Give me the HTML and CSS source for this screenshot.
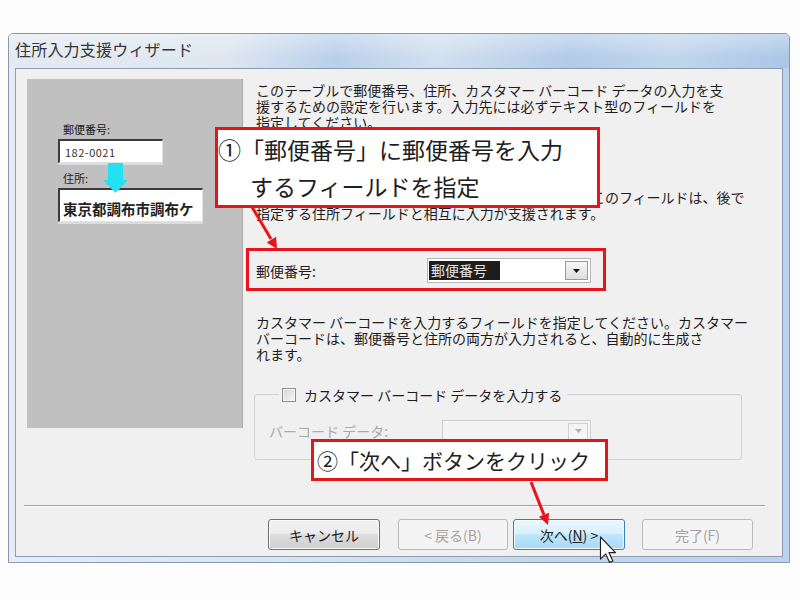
FILE: index.html
```html
<!DOCTYPE html>
<html lang="ja">
<head>
<meta charset="utf-8">
<title>住所入力支援ウィザード</title>
<link rel="stylesheet" href="styles.css">
</head>
<body>
<div class="window">
  <div class="titlebar"><span class="title">住所入力支援ウィザード</span></div>
  <div class="client">
    <div class="main">
      <div class="preview">
        <div class="pv-label">郵便番号:</div>
        <div class="pv-input pv-zip">182-0021</div>
        <div class="pv-label pv-label2">住所:</div>
        <div class="pv-input pv-addr">東京都調布市調布ケ</div>
        <svg class="cyan-arrow" width="25" height="30" viewBox="0 0 25 30"><polygon points="5,0 20,0 20,17 25,17 12.5,30 0,17 5,17" fill="#22e2f2"/></svg>
      </div>
      <div class="content">
        <p class="para p1">このテーブルで郵便番号、住所、カスタマー バーコード データの入力を支<br>援するための設定を行います。入力先には必ずテキスト型のフィールドを<br>指定してください。</p>
        <p class="para p2">郵便番号を入力するフィールドを指定してください。このフィールドは、後で<br>指定する住所フィールドと相互に入力が支援されます。</p>
        <div class="row">
          <span class="row-label">郵便番号:</span>
          <div class="combo">
            <span class="sel">郵便番号</span>
            <span class="drop"><svg width="7" height="4" viewBox="0 0 7 4"><polygon points="0,0 7,0 3.5,4" fill="#111"/></svg></span>
          </div>
        </div>
        <p class="para p3">カスタマー バーコードを入力するフィールドを指定してください。カスタマー<br>バーコードは、郵便番号と住所の両方が入力されると、自動的に生成さ<br>れます。</p>
        <div class="group">
          <div class="legend"><span class="checkbox"></span><span class="legend-text">カスタマー バーコード データを入力する</span></div>
          <div class="group-row">
            <span class="dis-label">バーコード データ:</span>
            <div class="combo combo-dis">
              <span class="drop drop-dis"><svg width="7" height="4" viewBox="0 0 7 4"><polygon points="0,0 7,0 3.5,4" fill="#b0b0b0"/></svg></span>
            </div>
          </div>
        </div>
      </div>
    </div>
    <div class="separator"></div>
    <div class="buttons">
      <div class="btn btn-normal btn-cancel">キャンセル</div>
      <div class="btn btn-disabled btn-back">&lt; 戻る(B)</div>
      <div class="btn btn-hover btn-next">次へ(<u>N</u>) &gt;</div>
      <div class="btn btn-disabled btn-finish">完了(F)</div>
    </div>
  </div>
</div>

<div class="highlight"></div>
<div class="callout callout1">
  <div class="co-line">①「郵便番号」に郵便番号を入力</div>
  <div class="co-line co-indent">するフィールドを指定</div>
</div>
<div class="callout callout2">
  <div class="co-line2">②「次へ」ボタンをクリック</div>
</div>

<svg class="overlay" width="800" height="600" viewBox="0 0 800 600">
  <line x1="252" y1="207" x2="271" y2="239" stroke="#e8141c" stroke-width="3"/>
  <polygon points="277,249 266.7,242.4 276.1,236.8" fill="#e8141c"/>
  <line x1="531" y1="482" x2="544" y2="515" stroke="#e8141c" stroke-width="3"/>
  <polygon points="548,525 538.9,516.8 549.1,512.8" fill="#e8141c"/>
  <g transform="translate(600.5,537) scale(1.3)">
    <polygon points="0,0 0,17 4,13 7,19.5 9.5,18.5 6.5,12 11.5,12" fill="#fff" stroke="#222" stroke-width="0.9" stroke-linejoin="round"/>
  </g>
</svg>
</body>
</html>
```

FILE: styles.css
```css
* { box-sizing: border-box; }
html, body { margin: 0; padding: 0; }
body {
  width: 800px;
  height: 600px;
  background: #fdfdfd;
  font-family: "Noto Sans CJK JP", "Noto Sans", sans-serif;
  color: #1c1c1c;
  position: relative;
  overflow: hidden;
}

.window {
  margin: 33px 0 0 8px;
  width: 782px;
  height: 530px;
  border: 1px solid #8799b0;
  border-radius: 5px 5px 0 0;
  padding: 0 6px 5px 6px;
  background: linear-gradient(to right, #e6edf5 0%, #d6e2ef 40%, #c4d6eb 70%, #bcd1ea 100%);
  display: flex;
  flex-direction: column;
}

.titlebar {
  height: 34px;
  display: flex;
  align-items: center;
  padding-bottom: 5px;
  background:
    linear-gradient(to bottom, rgba(255,255,255,0.35), rgba(255,255,255,0) 70%),
    linear-gradient(to right, #e4eaf1 0%, #dde6f0 28%, #b9d0ea 42%, #d2e0ef 55%, #b2cbe8 72%, #c1d6ec 85%, #abc6e6 100%);
  margin: 0 -6px;
  padding-left: 6px;
  border-radius: 4px 4px 0 0;
}
.title {
  font-size: 16px;
  color: #353535;
  letter-spacing: 0.2px;
}

.client {
  height: 489px;
  border: 1px solid #8c9db3;
  background: #f0f0f0;
  padding: 10px 0 0 11px;
  display: flex;
  flex-direction: column;
  overflow: hidden;
}

.main {
  display: flex;
  align-items: flex-start;
}

.preview {
  position: relative;
  width: 216px;
  height: 349px;
  flex-shrink: 0;
  background: #c0c0c0;
  border-right: 1px solid #aaaaaa;
  padding-top: 44px;
}
.pv-label {
  margin-left: 36px;
  font-size: 11px;
  line-height: 13px;
  color: #202020;
}
.pv-label2 {
  margin-top: 9px;
}
.pv-input {
  margin-left: 31px;
  margin-top: 3px;
  background: #ffffff;
  border-top: 2px solid #3a3a3a;
  border-left: 2px solid #3a3a3a;
  border-right: 1px solid #e2e2e2;
  border-bottom: 1px solid #e2e2e2;
  box-shadow: 0 2px 0 #dcdcdc;
  display: flex;
  align-items: center;
  padding-left: 5px;
}
.pv-zip {
  width: 105px;
  height: 24px;
  font-size: 11px;
  color: #333;
  letter-spacing: 0.5px;
}
.pv-addr {
  width: 145px;
  height: 34px;
  font-size: 14.5px;
  font-weight: 700;
  color: #222;
  padding-left: 3px;
  padding-top: 5px;
}
.cyan-arrow {
  position: absolute;
  left: 76px;
  top: 84px;
}

.content {
  margin-left: 13px;
  width: 500px;
}
.para {
  margin: 0;
  font-size: 14px;
  line-height: 16px;
  color: #1e1e1e;
  white-space: nowrap;
}
.p1 { margin-top: 3px; }
.p2 { margin-top: 59px; }
.p3 { margin-top: 31px; }

.row {
  margin-top: 37px;
  height: 25px;
  display: flex;
  align-items: center;
}
.row-label {
  width: 171px;
  font-size: 14px;
  color: #1e1e1e;
}
.combo {
  width: 164px;
  height: 25px;
  background: #ffffff;
  border: 1px solid #b4b6ba;
  display: flex;
  align-items: center;
  padding: 0 2px 0 1px;
}
.sel {
  width: 71px;
  height: 19px;
  background: #1d1d1d;
  color: #e6e6e6;
  font-size: 14px;
  line-height: 19px;
  padding-left: 2px;
}
.drop {
  margin-left: auto;
  width: 23px;
  height: 19px;
  border: 1px solid #9a9a9a;
  background: linear-gradient(#f6f6f6, #dedede);
  display: flex;
  align-items: center;
  justify-content: center;
}

.group {
  margin-top: 32px;
  margin-left: -2px;
  width: 488px;
  height: 66px;
  border: 1px solid #d2d2d2;
  border-radius: 3px;
}
.legend {
  margin-top: -9px;
  margin-left: 24px;
  width: max-content;
  height: 18px;
  display: flex;
  align-items: center;
  background: #f0f0f0;
  padding: 0 5px 0 3px;
}
.checkbox {
  width: 14px;
  height: 14px;
  border: 1px solid #8e8f8f;
  background: linear-gradient(135deg, #d6d6d6, #f6f6f6);
  box-shadow: inset 0 0 0 1px #f4f4f4;
}
.legend-text {
  margin-left: 8px;
  font-size: 14px;
  line-height: 18px;
  color: #1e1e1e;
}
.group-row {
  margin-top: 16px;
  height: 22px;
  display: flex;
  align-items: center;
}
.dis-label {
  margin-left: 14px;
  width: 173px;
  font-size: 14px;
  color: #a9a9a9;
}
.combo-dis {
  width: 149px;
  height: 22px;
  border-color: #cfcfcf;
  background: #f4f4f4;
}
.drop-dis {
  width: 20px;
  height: 17px;
  border-color: #d0d0d0;
  background: #f4f4f4;
}

.separator {
  margin-top: 45px;
  margin-left: -3px;
  margin-right: 17px;
  border-top: 1px solid #a0a0a0;
  border-bottom: 1px solid #ffffff;
}

.buttons {
  margin-top: 12px;
  padding-left: 241px;
  display: flex;
}
.btn {
  height: 31px;
  border-radius: 3px;
  display: flex;
  align-items: center;
  justify-content: center;
  font-size: 14px;
}
.btn-normal {
  border: 1px solid #707070;
  background: linear-gradient(#f2f2f2 0%, #ebebeb 50%, #dddddd 50%, #cfcfcf 100%);
  color: #1a1a1a;
  box-shadow: inset 0 0 0 1px #fbfbfb;
}
.btn-disabled {
  border: 1px solid #b7bbbe;
  background: #f4f4f4;
  color: #a3a3a3;
}
.btn-hover {
  border: 1px solid #3c7fb1;
  background: linear-gradient(#eaf6fd 0%, #d9f0fc 50%, #bee6fd 50%, #a7d9f5 100%);
  color: #1a1a1a;
  box-shadow: inset 0 0 0 1px #f2fafe;
}
.btn-cancel { width: 112px; margin-right: 18px; }
.btn-back { width: 110px; margin-right: 5px; }
.btn-next { width: 112px; margin-right: 17px; }
.btn-finish { width: 111px; }

.highlight {
  position: absolute;
  left: 246px;
  top: 248px;
  width: 360px;
  height: 43px;
  border: 3px solid #e8141c;
}
.callout {
  position: absolute;
  background: #ffffff;
  border: 3px solid #e8141c;
  color: #202020;
}
.callout1 {
  left: 215px;
  top: 127px;
  width: 385px;
  height: 81px;
  padding: 1px 0 0 0;
}
.co-line {
  font-size: 23px;
  line-height: 37px;
  padding-left: 0;
  white-space: nowrap;
}
.co-indent {
  padding-left: 32px;
}
.callout2 {
  left: 311px;
  top: 439px;
  width: 297px;
  height: 42px;
  padding-left: 3px;
}
.co-line2 {
  font-size: 21px;
  line-height: 36px;
  white-space: nowrap;
}

.overlay {
  position: absolute;
  left: 0;
  top: 0;
  pointer-events: none;
}
```
